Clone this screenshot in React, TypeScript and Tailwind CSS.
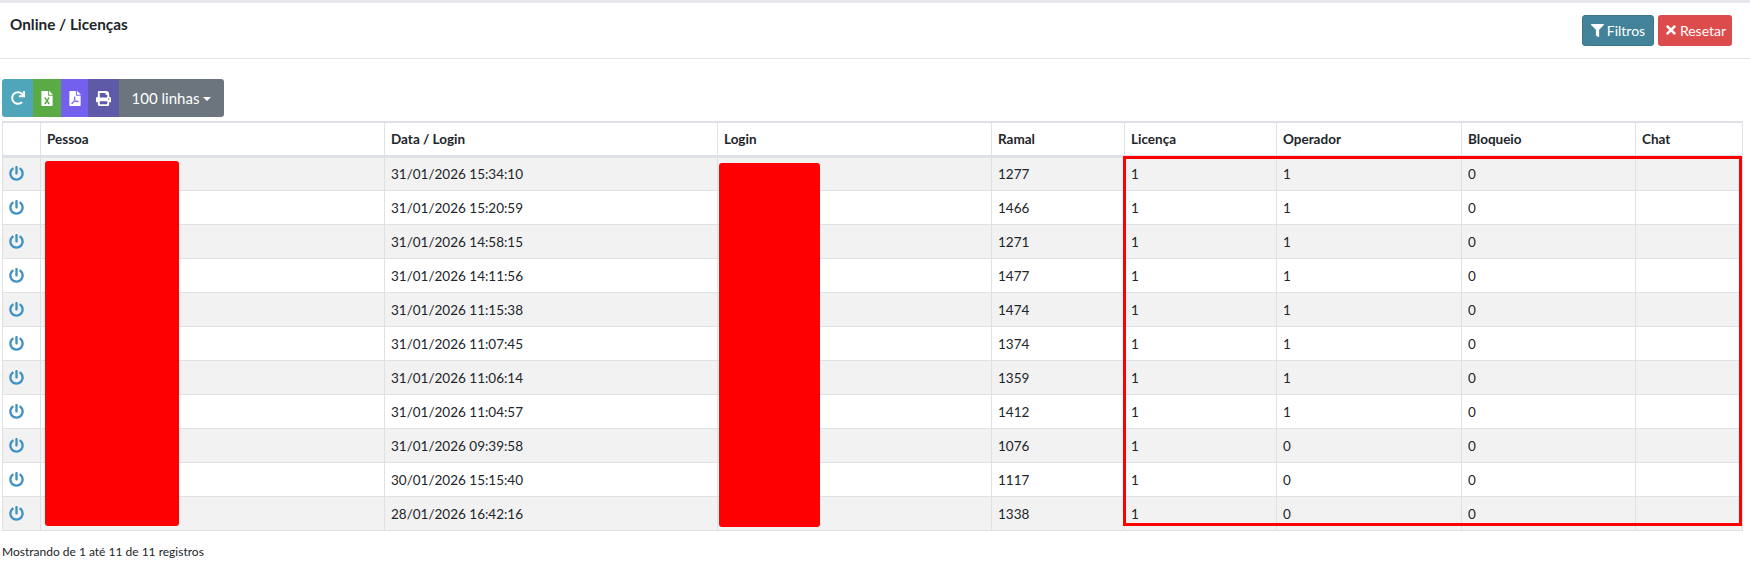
import { FaFileExcel, FaFilePdf, FaPrint, FaFilter, FaTimes, FaRedo, FaPowerOff } from "react-icons/fa";

const rows = [
  ["31/01/2026 15:34:10", "1277", "1", "1", "0"],
  ["31/01/2026 15:20:59", "1466", "1", "1", "0"],
  ["31/01/2026 14:58:15", "1271", "1", "1", "0"],
  ["31/01/2026 14:11:56", "1477", "1", "1", "0"],
  ["31/01/2026 11:15:38", "1474", "1", "1", "0"],
  ["31/01/2026 11:07:45", "1374", "1", "1", "0"],
  ["31/01/2026 11:06:14", "1359", "1", "1", "0"],
  ["31/01/2026 11:04:57", "1412", "1", "1", "0"],
  ["31/01/2026 09:39:58", "1076", "1", "0", "0"],
  ["30/01/2026 15:15:40", "1117", "1", "0", "0"],
  ["28/01/2026 16:42:16", "1338", "1", "0", "0"],
];

const cols = [
  { label: "", w: "w-[38px]" },
  { label: "Pessoa", w: "w-[344px]" },
  { label: "Data / Login", w: "w-[333px]" },
  { label: "Login", w: "w-[274px]" },
  { label: "Ramal", w: "w-[133px]" },
  { label: "Licença", w: "w-[152px]" },
  { label: "Operador", w: "w-[185px]" },
  { label: "Bloqueio", w: "w-[174px]" },
  { label: "Chat", w: "w-[107px]" },
];

const th = "h-[34px] border border-[#dee2e6] border-t-2 border-b-[3px] px-[6px] text-left align-middle font-bold text-[13.5px] text-[#212529]";
const td = "h-[34px] border border-[#dee2e6] px-[6px] pt-[2px] align-middle text-[13.5px] text-[#212529]";

export default function App() {
  return (
    <div className="h-[563px] w-[1750px] overflow-hidden bg-white font-['Lato',sans-serif]">
      <div className="h-[3px] bg-[#e6e8ec]" />
      <header className="flex h-[56px] items-start justify-between border-b border-[#dee2e6] pl-[10px] pr-[18px]">
        <h1 className="mt-[9px] text-[15.3px] font-bold leading-[24px] text-[#212529]">Online / Licenças</h1>
        <div className="mt-[12px] flex gap-[4px]">
          <button className="flex h-[31px] w-[72px] items-center justify-center gap-[3px] rounded-[3px] border border-[#3b7689] bg-[#43839a] pb-[1px] text-[14px] text-white">
            <FaFilter className="h-[13px] w-[13px]" />
            Filtros
          </button>
          <button className="flex h-[31px] w-[74px] items-center justify-center gap-[2px] rounded-[3px] bg-[#dc4c4c] pb-[1px] text-[14px] text-white">
            <FaTimes className="h-[14px] w-[14px]" />
            Resetar
          </button>
        </div>
      </header>
      <div className="relative px-[2px] pt-[20px]">
        <div className="flex h-[38px] w-[222px] overflow-hidden rounded-[3px] text-white">
          <div className="flex w-[31px] items-center justify-center bg-[#4fa6bb]">
            <FaRedo className="h-[14px] w-[14px]" />
          </div>
          <div className="flex w-[28px] items-center justify-center bg-[#5aaa46]">
            <FaFileExcel className="h-[15px] w-[12px]" />
          </div>
          <div className="flex w-[27px] items-center justify-center bg-[#7460ee]">
            <FaFilePdf className="h-[15px] w-[12px]" />
          </div>
          <div className="flex w-[31px] items-center justify-center bg-[#5f5aa8]">
            <FaPrint className="h-[15px] w-[15px]" />
          </div>
          <div className="flex flex-1 items-center justify-center gap-[4px] bg-[#6c757d] text-[15px]">
            100 linhas
            <span className="mt-[1px] h-0 w-0 border-x-[4px] border-t-[4px] border-x-transparent border-t-white" />
          </div>
        </div>
        <table className="mt-[4px] w-[1740px] table-fixed border-collapse">
          <thead>
            <tr>
              {cols.map((c) => (
                <th key={c.label} className={`${c.w} ${th}`}>{c.label}</th>
              ))}
            </tr>
          </thead>
          <tbody>
            {rows.map((r, i) => (
              <tr key={i} className={i % 2 === 0 ? "bg-[#f2f2f2]" : "bg-white"}>
                <td className={td}>
                  <FaPowerOff className="mb-[2px] h-[15px] w-[15px] text-[#4192c4]" />
                </td>
                <td className={td} />
                <td className={td}>{r[0]}</td>
                <td className={td} />
                <td className={td}>{r[1]}</td>
                <td className={td}>{r[2]}</td>
                <td className={td}>{r[3]}</td>
                <td className={td}>{r[4]}</td>
                <td className={td} />
              </tr>
            ))}
          </tbody>
        </table>
        <p className="mt-[11px] text-[12px] leading-[20px] text-[#212529]">Mostrando de 1 até 11 de 11 registros</p>

        <div className="absolute left-[45px] top-[102px] h-[365px] w-[134px] rounded-[3px] bg-[#ff0000]" />
        <div className="absolute left-[719px] top-[104px] h-[364px] w-[101px] rounded-[3px] bg-[#ff0000]" />
        <div className="absolute left-[1123px] top-[97px] h-[370px] w-[619px] border-[3px] border-[#ff0000]" />
      </div>
    </div>
  );
}
